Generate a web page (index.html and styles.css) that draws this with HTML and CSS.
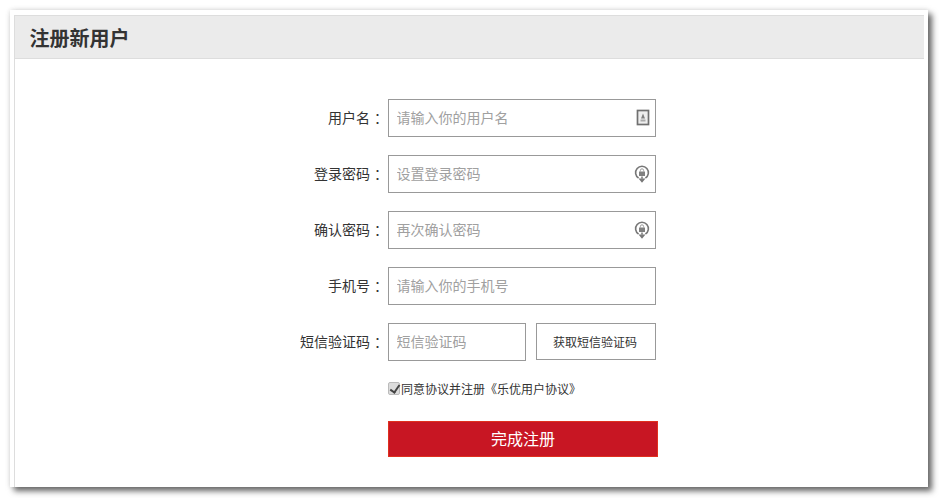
FILE: index.html
```html
<html>
    <head>
        <meta charset="UTF-8" />
        <link rel="stylesheet" href="styles.css">
    </head>
    <body>
        <div class="card">
            <div class="panel">
                <h1 class="title">注册新用户</h1>
                <form class="reg_form">
                    <div class="row">
                        <label class="label">用户名<span class="colon">：</span></label>
                        <div class="field">
                            <input class="text_input" type="text" placeholder="请输入你的用户名" />
                            <svg class="field_icon" width="14" height="17" viewBox="0 0 14 17">
                                <rect x="1.5" y="1.5" width="11" height="14" fill="#eee" stroke="#707070" stroke-width="1.7" />
                                <path d="M7 4.5 L9 9.5 H5 Z" fill="#808080" />
                                <path d="M4.5 11.5 H9.5" stroke="#aaa" stroke-width="2" />
                            </svg>
                        </div>
                    </div>
                    <div class="row">
                        <label class="label">登录密码<span class="colon">：</span></label>
                        <div class="field">
                            <input class="text_input" type="password" placeholder="设置登录密码" />
                            <svg class="field_icon" width="16" height="18" viewBox="0 0 16 18">
                                <path d="M4.6 13 A6.4 6.4 0 1 1 11.4 13" fill="none" stroke="#777" stroke-width="1.6" />
                                <rect x="5" y="6.5" width="6" height="4.5" fill="#808080" />
                                <path d="M6.4 6.5 V5.4 A1.6 1.6 0 0 1 9.6 5.4 V6.5" fill="none" stroke="#999" />
                                <path d="M8 11.5 V16.5 M5.5 13.5 L8 16.5 L10.5 13.5" fill="none" stroke="#777" stroke-width="1.5" />
                            </svg>
                        </div>
                    </div>
                    <div class="row">
                        <label class="label">确认密码<span class="colon">：</span></label>
                        <div class="field">
                            <input class="text_input" type="password" placeholder="再次确认密码" />
                            <svg class="field_icon" width="16" height="18" viewBox="0 0 16 18">
                                <path d="M4.6 13 A6.4 6.4 0 1 1 11.4 13" fill="none" stroke="#777" stroke-width="1.6" />
                                <rect x="5" y="6.5" width="6" height="4.5" fill="#808080" />
                                <path d="M6.4 6.5 V5.4 A1.6 1.6 0 0 1 9.6 5.4 V6.5" fill="none" stroke="#999" />
                                <path d="M8 11.5 V16.5 M5.5 13.5 L8 16.5 L10.5 13.5" fill="none" stroke="#777" stroke-width="1.5" />
                            </svg>
                        </div>
                    </div>
                    <div class="row">
                        <label class="label">手机号<span class="colon">：</span></label>
                        <div class="field">
                            <input class="text_input" type="text" placeholder="请输入你的手机号" />
                        </div>
                    </div>
                    <div class="row">
                        <label class="label">短信验证码<span class="colon">：</span></label>
                        <div class="sms_field">
                            <input class="text_input sms_input" type="text" placeholder="短信验证码" />
                            <button class="sms_btn" type="button">获取短信验证码</button>
                        </div>
                    </div>
                    <div class="agree">
                        <input class="agree_box" type="checkbox" checked />
                        <span>同意协议并注册《乐优用户协议》</span>
                    </div>
                    <button class="submit_btn" type="button">完成注册</button>
                </form>
            </div>
        </div>
    </body>
</html>
```

FILE: styles.css
```css
* {
    box-sizing: border-box;
}
body {
    margin: 0;
    padding: 10px 11px 0 10px;
    background: #fff;
    font-family: "Noto Sans CJK SC", "Liberation Sans", sans-serif;
    color: #333;
}
.card {
    height: 477px;
    padding: 5px 4px 0 4px;
    background: #fff;
    box-shadow: 4px 4px 6px #666, 0 0 5px #ddd;
}
.panel {
    height: 100%;
    border-left: 1px solid #ddd;
}
.title {
    margin: 0;
    height: 44px;
    padding-left: 14.5px;
    background: #ebebeb;
    border-top: 1px solid #ddd;
    border-bottom: 1px solid #ddd;
    font-size: 20px;
    font-weight: bold;
    line-height: 44px;
}
.reg_form {
    padding: 40px 0 0 373px;
    width: 643px;
}
.row {
    display: flex;
    height: 38px;
    margin-bottom: 18px;
}
.label {
    width: 140px;
    margin-left: -140px;
    text-align: right;
    font-size: 14px;
    line-height: 36px;
}
.colon {
    margin-left: 4px;
}
.field {
    display: flex;
    align-items: center;
    position: relative;
}
.text_input {
    width: 268px;
    height: 38px;
    padding: 0 7.5px 2px;
    border: 1px solid #999;
    outline: none;
    font-family: inherit;
    font-size: 14px;
}
.text_input::placeholder {
    color: #a0a0a0;
}
.field_icon {
    position: absolute;
    right: 6px;
    top: 10px;
    filter: blur(0.3px);
}
.sms_field {
    display: flex;
    gap: 10px;
}
.sms_input {
    width: 138px;
}
.sms_btn {
    width: 120px;
    height: 37px;
    padding: 0 2px 0 0;
    background: #fff;
    border: 1px solid #999;
    font-family: inherit;
    font-size: 12px;
    color: #333;
}
.agree {
    display: flex;
    align-items: center;
    height: 18px;
    padding-top: 1px;
    font-size: 12px;
}
.agree_box {
    appearance: none;
    position: relative;
    width: 12px;
    height: 13px;
    margin: 0 1px 0 0;
    background: #dcdcdc;
    border: 1px solid #bbb;
    border-radius: 2px;
}
.agree_box:checked::after {
    content: "";
    position: absolute;
    left: 3px;
    top: 0;
    width: 4px;
    height: 8px;
    border: solid #444;
    border-width: 0 2px 2px 0;
    transform: rotate(35deg);
}
.submit_btn {
    display: block;
    width: 270px;
    height: 36px;
    margin-top: 24px;
    padding: 0 0 2px;
    background: #c81623;
    border: 1px solid #e0301e;
    font-family: inherit;
    font-size: 16px;
    color: #fff;
}
```
